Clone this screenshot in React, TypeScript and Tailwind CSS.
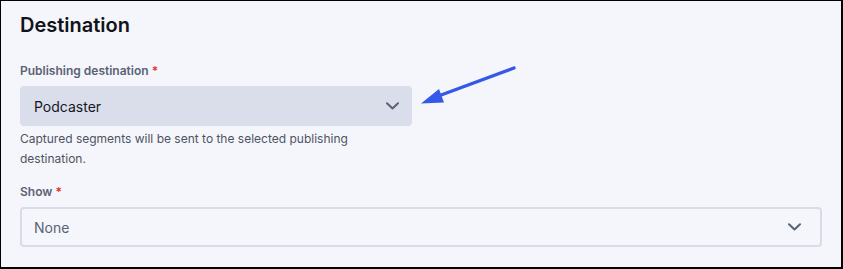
import React from "react";

function Chevron() {
  return (
    <svg width="13" height="8" viewBox="0 0 13 8" fill="none">
      <path d="M1 1.2l5.5 5.3 5.5-5.3" stroke="#5a6275" strokeWidth="2" strokeLinecap="round" strokeLinejoin="round" />
    </svg>
  );
}

export default function App() {
  return (
    <div
      className="relative w-[843px] h-[269px] bg-[#f5f6fb] border-l border-t border-r-2 border-b-2 border-black px-[19px] pt-[10px]"
      style={{ fontFamily: "Inter, 'Noto Sans', sans-serif" }}
    >
      <h2 className="text-[20px] leading-[28px] font-semibold text-[#111318]">Destination</h2>

      <div className="mt-[24px] text-[12px] leading-[16px] font-semibold text-[#5a6275]">
        Publishing destination <span className="text-[#e5312e]">*</span>
      </div>
      <div className="mt-[7px] w-[392px] h-[40px] rounded-[4px] bg-[#dadeea] flex items-center justify-between pl-[14px] pr-[13px]">
        <span className="text-[14px] text-[#16181f]">Podcaster</span>
        <Chevron />
      </div>
      <p className="mt-[3px] w-[360px] text-[12px] leading-[20px] text-[#4d5363]">
        Captured segments will be sent to the selected publishing destination.
      </p>

      <div className="mt-[15px] text-[12px] leading-[16px] font-semibold text-[#5a6275]">
        Show <span className="text-[#e5312e]">*</span>
      </div>
      <div className="mt-[7px] w-[802px] h-[40px] rounded-[4px] border-2 border-[#d8dce8] flex items-center justify-between pl-[12px] pr-[19px]">
        <span className="text-[14px] text-[#5a6275]">None</span>
        <Chevron />
      </div>

      <svg className="absolute left-0 top-0" width="843" height="269" viewBox="0 0 843 269" fill="none">
        <line x1="513" y1="67" x2="432" y2="97" stroke="#3358ea" strokeWidth="3.4" strokeLinecap="round" />
        <polygon points="420,102.5 438,88 443,101.5" fill="#3358ea" />
      </svg>
    </div>
  );
}
